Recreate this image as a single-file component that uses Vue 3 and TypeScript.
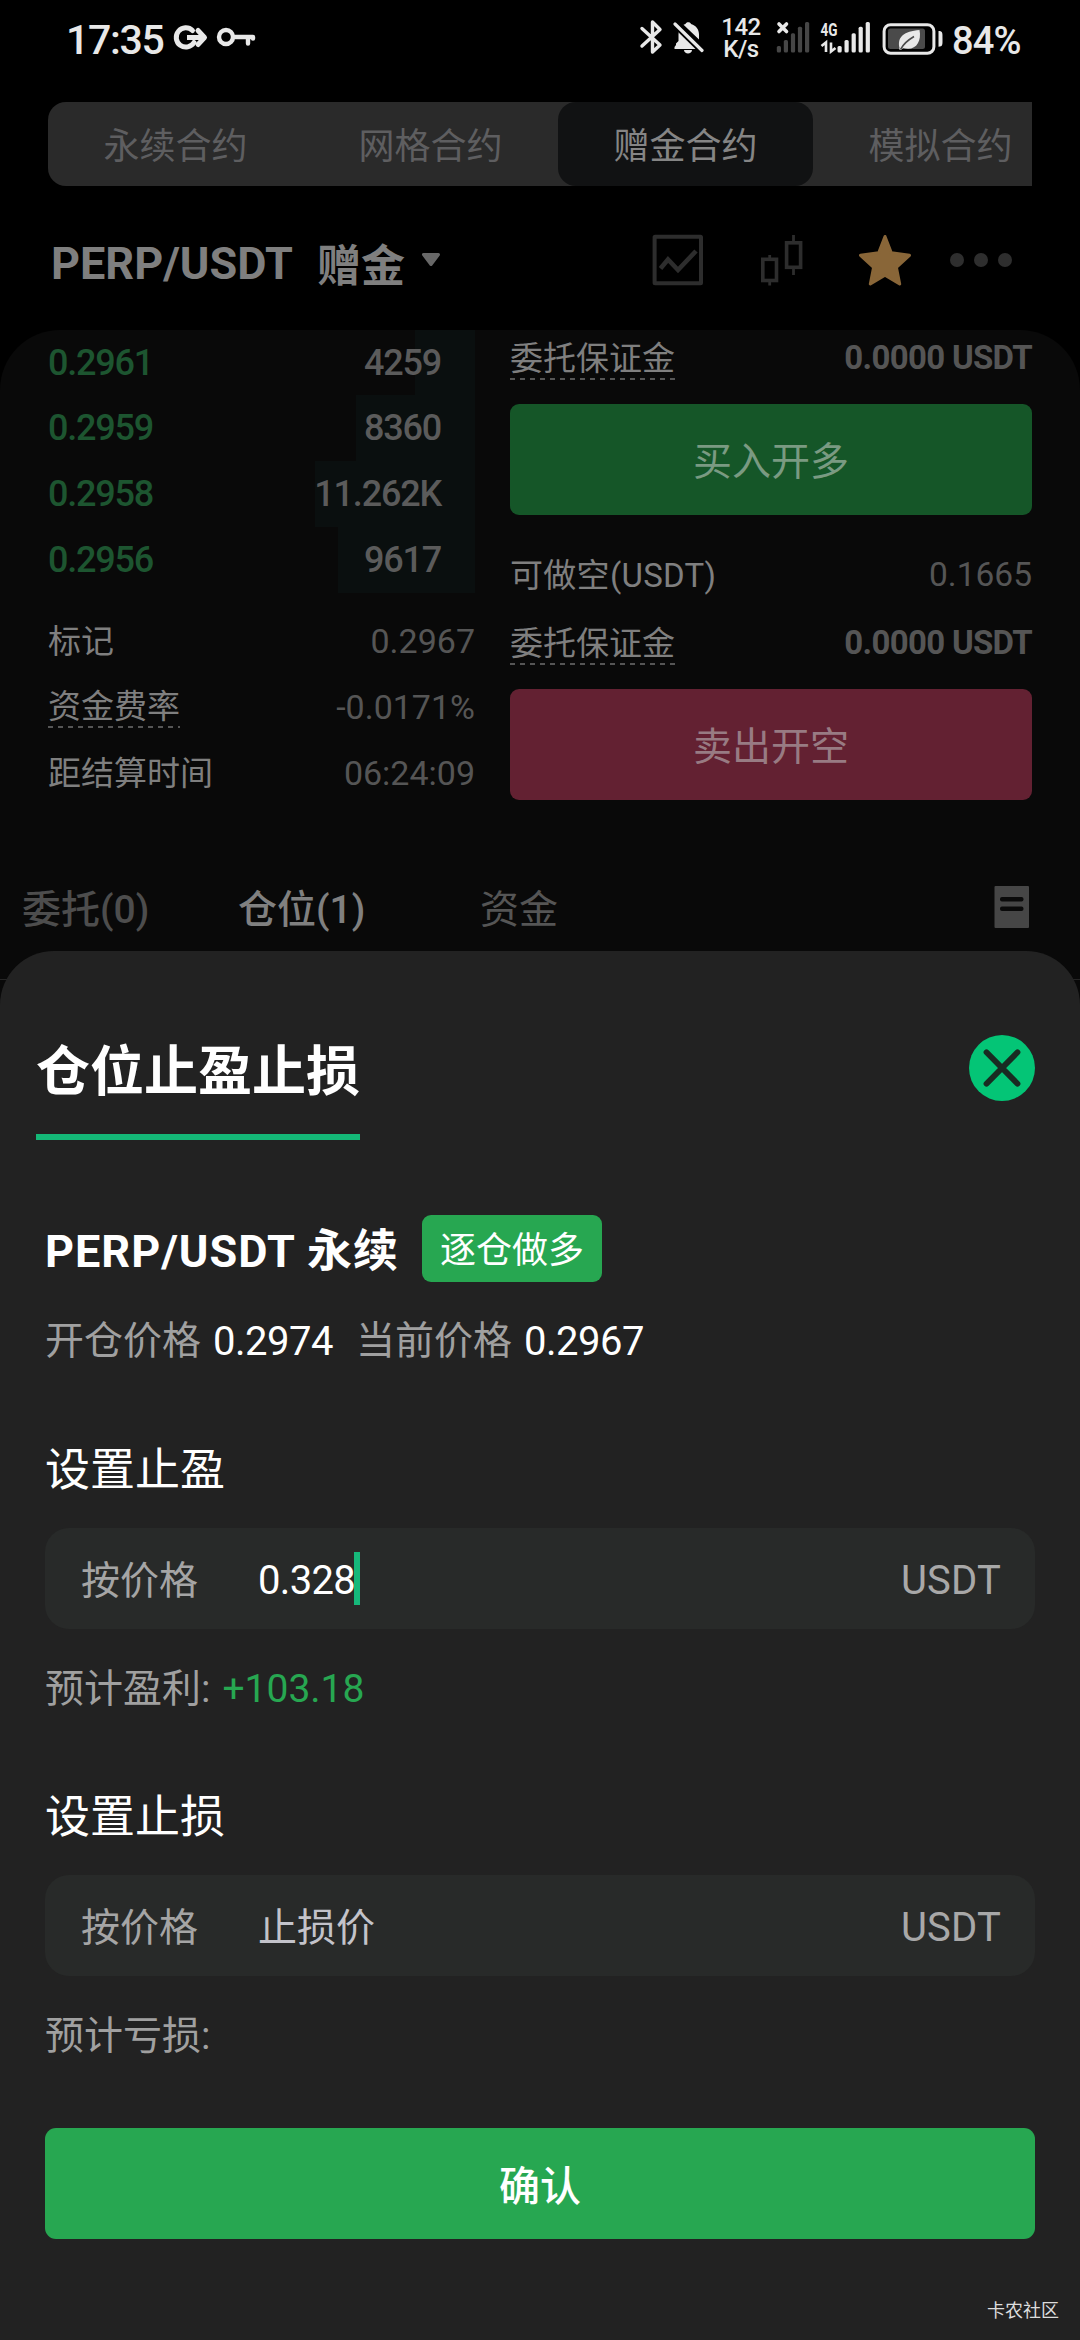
<script setup lang="ts">
interface BookRow {
  price: string
  amount: string
  depth: number
}

interface Stat {
  label: string
  value: string
  hint?: boolean
}

const modes: string[] = ['永续合约', '网格合约', '赠金合约', '模拟合约']
const activeMode = 2

const bids: BookRow[] = [
  { price: '0.2961', amount: '4259', depth: 60 },
  { price: '0.2959', amount: '8360', depth: 119 },
  { price: '0.2958', amount: '11.262K', depth: 160 },
  { price: '0.2956', amount: '9617', depth: 137 },
]

const stats: Stat[] = [
  { label: '标记', value: '0.2967' },
  { label: '资金费率', value: '-0.0171%', hint: true },
  { label: '距结算时间', value: '06:24:09' },
]

const bars = [
  { x: 0, y: 46 },
  { x: 7, y: 40 },
  { x: 14.1, y: 33.3 },
  { x: 21.1, y: 26.7 },
  { x: 28.2, y: 22 },
]
</script>

<template>
  <div class="screen">
    <div class="status">
      <span class="clock">17:35</span>
      <svg class="i-g" width="36" height="28" viewBox="172 23 36 28" fill="none" stroke="#e8e8e8" stroke-width="5" stroke-linejoin="round">
        <path d="M192.500 30.500A9.600 9.600 0 1 0 194 42.500" stroke-linecap="round" />
        <path d="M187 37.500H202" />
        <path d="M198 30.500L204.500 37.500L198 44.500" stroke-linecap="round" />
      </svg>
      <svg class="i-key" width="40" height="20" viewBox="216 27 40 20" fill="none" stroke="#e8e8e8" stroke-width="4.400" stroke-linecap="round" stroke-linejoin="round">
        <circle cx="226" cy="37" r="7" />
        <path d="M234 37H253V38.500M248 37V43.500" />
      </svg>
      <span class="grow"></span>
      <svg class="i-bt" width="24" height="36" viewBox="638 19 24 36" fill="none" stroke="#e8e8e8" stroke-width="3.400" stroke-linejoin="round" stroke-linecap="round">
        <path d="M641 28.500L659 45L651.500 52V22L659 29.500L641 46" />
      </svg>
      <svg class="i-bell" width="31" height="34" viewBox="672 20 31 34">
        <path fill="#e8e8e8" d="M675 45V43.500L677.500 41V34.500C677.500 31 678.500 28 680.500 26.300L697 43.500L699 47V49H673.500V47ZM682.500 24.800L684.500 24C685 21.500 689.500 21.500 690 24C695.500 25.500 698 30 698 34.500V39.500ZM683 50H691C691 54.500 683 54.500 683 50Z" />
        <path d="M674 24L701 50.500" stroke="#000" stroke-width="7" />
        <path d="M674 24L701 50.500" stroke="#e8e8e8" stroke-width="3.200" stroke-linecap="round" />
      </svg>
      <span class="speed"><b>142</b><b>K/s</b></span>
      <svg class="i-sim" width="34" height="34" viewBox="775 20 34 34">
        <rect v-for="b in bars" :key="b.x" :x="775.800 + b.x" :y="b.y" width="4.200" :height="52.500 - b.y" rx="1.500" fill="#464646" />
        <path d="M778 24L785.500 31.500M785.500 24L778 31.500" stroke="#e8e8e8" stroke-width="3.600" stroke-linecap="round" />
      </svg>
      <svg class="i-sim2" width="52" height="44" viewBox="819 10 52 44">
        <text x="819.500" y="35.500" font-size="19" font-weight="700" textLength="17" lengthAdjust="spacingAndGlyphs" fill="#e8e8e8">4G</text>
        <path d="M820.500 46L825 42.500V52M830 42.500V51.500L834.500 48" fill="none" stroke="#e8e8e8" stroke-width="2.600" />
        <rect v-for="b in bars" :key="b.x" :x="836.500 + b.x" :y="b.y" width="4.200" :height="52.500 - b.y" rx="1.500" fill="#e8e8e8" />
      </svg>
      <svg class="i-bat" width="62" height="34" viewBox="881 21.500 62 34">
        <rect x="883.100" y="24.200" width="49.800" height="28.600" rx="6.500" fill="none" stroke="#e8e8e8" stroke-width="3" />
        <rect x="887" y="28" width="37" height="20.500" rx="2.500" fill="#4a4a4a" />
        <path d="M937.500 30.500C942 30.500 941.500 33 941.500 38.300C941.500 44 942 46.200 937.500 46.200Z" fill="#e8e8e8" />
        <path d="M918.500 29.500C921 42 914 51 902 47.500L900 49.500C898 49.500 898 48.500 898.500 47.500C896 36 903 31 918.500 29.500Z" fill="#e8e8e8" />
        <path d="M899.500 49C902.500 43 907 39.500 913 36" fill="none" stroke="#4a4a4a" stroke-width="1.600" />
      </svg>
      <span class="battery">84%</span>
    </div>

    <div class="modes">
      <div v-for="(m, i) in modes" :key="m" class="mode" :class="{ on: i === activeMode }">{{ m }}</div>
    </div>

    <div class="pair">
      <span class="symbol">PERP/USDT</span>
      <span class="gift">赠金</span>
      <svg class="caret" width="20" height="16" viewBox="0 0 20 16"><path d="M2.500 2.500H17.500L10 12.500Z" fill="#686868" stroke="#686868" stroke-width="3" stroke-linejoin="round" /></svg>
      <span class="grow"></span>
      <svg width="52" height="52" viewBox="652 236 52 52" fill="none" stroke="#2d2d2d">
        <rect x="654.600" y="238.700" width="46.400" height="46.600" rx="0.500" stroke-width="4" />
        <path d="M660.500 270.500L668 261.500L678 272L696 253" stroke-width="4.600" />
      </svg>
      <svg class="candles" width="44" height="52" viewBox="760 236 44 52" fill="none" stroke="#2d2d2d">
        <rect x="762.800" y="261.300" width="13.700" height="21.200" stroke-width="3.600" />
        <rect x="786.600" y="244.800" width="14" height="24.500" stroke-width="3.600" />
        <path d="M769.700 257V261M769.700 283V287.500M793.500 237V244M793.500 270V277" stroke-width="2.800" />
      </svg>
      <svg class="star" width="54" height="52" viewBox="858 236 54 52">
        <path d="M885 238.500L891.300 254.800L909.500 257.300L896.400 269.300L899.700 286L885 277.200L870.300 286L873.600 269.300L860.500 257.300L878.700 254.800Z" fill="#896638" stroke="#896638" stroke-width="3" stroke-linejoin="round" />
      </svg>
      <svg class="dots" width="64" height="16" viewBox="949 253.500 64 16" fill="#2e2e2e">
        <circle cx="957" cy="261.500" r="7" /><circle cx="981" cy="261.500" r="7" /><circle cx="1005" cy="261.500" r="7" />
      </svg>
    </div>

    <div class="panel">
      <div class="trade">
        <div class="book">
          <div v-for="r in bids" :key="r.price" class="bid">
            <span class="price">{{ r.price }}</span>
            <span class="amount">{{ r.amount }}</span>
            <i class="depth" :style="{ width: r.depth + 'px' }"></i>
          </div>
          <div class="stats">
            <div v-for="s in stats" :key="s.label" class="stat">
              <span class="label" :class="{ hint: s.hint }">{{ s.label }}</span>
              <span class="value">{{ s.value }}</span>
            </div>
          </div>
        </div>
        <div class="order">
          <div class="line"><span class="label hint">委托保证金</span><b class="margin">0.0000 USDT</b></div>
          <div class="btn buy">买入开多</div>
          <div class="line avail"><span class="label">可做空(USDT)</span><span class="value">0.1665</span></div>
          <div class="line"><span class="label hint">委托保证金</span><b class="margin">0.0000 USDT</b></div>
          <div class="btn sell">卖出开空</div>
        </div>
      </div>
      <div class="tabs">
        <span class="tab first">委托(0)</span>
        <span class="tab second">仓位(1)</span>
        <span class="tab third">资金</span>
        <span class="grow"></span>
        <svg width="36" height="42" viewBox="0 0 36 42">
          <rect x="0.500" width="34.500" height="42" rx="1" fill="#464646" />
          <rect x="6" y="11" width="23.500" height="4.500" rx="2" fill="#0a0a0a" />
          <rect x="6" y="20.500" width="23.500" height="4.500" rx="2" fill="#0a0a0a" />
        </svg>
      </div>
    </div>

    <div class="sheet">
      <div class="head">
        <span class="title">仓位止盈止损</span>
        <svg width="66" height="66" viewBox="0 0 66 66">
          <circle cx="33" cy="33" r="33" fill="#04c576" />
          <path d="M17.500 17.300L48.500 48.700M48.500 17.300L17.500 48.700" stroke="#192b22" stroke-width="5.800" stroke-linecap="round" />
        </svg>
      </div>
      <div class="contract"><span class="name">PERP/USDT 永续</span><span class="badge">逐仓做多</span></div>
      <div class="prices">
        <span class="dim">开仓价格</span><span class="num">0.2974</span>
        <span class="dim second-price">当前价格</span><span class="num">0.2967</span>
      </div>
      <div class="section">设置止盈</div>
      <div class="field">
        <span class="kind">按价格</span><span class="entry">0.328</span><i class="cursor"></i>
        <span class="grow"></span><span class="unit">USDT</span>
      </div>
      <div class="estimate">预计盈利:<span class="gain">+103.18</span></div>
      <div class="section loss">设置止损</div>
      <div class="field">
        <span class="kind">按价格</span><span class="placeholder">止损价</span>
        <span class="grow"></span><span class="unit">USDT</span>
      </div>
      <div class="estimate">预计亏损:</div>
      <div class="confirm">确认</div>
      <div class="mark">卡农社区</div>
    </div>
  </div>
</template>

<style>
body {
  background: #000;
}
</style>

<style scoped>
.screen,
.screen * {
  box-sizing: border-box;
}
.screen {
  position: relative;
  display: flex;
  flex-direction: column;
  width: 1080px;
  height: 2340px;
  overflow: hidden;
  background: #000;
  color: #7f7f7f;
  font-family: Roboto, "Noto Sans CJK SC", sans-serif;
  line-height: 1.2;
  white-space: nowrap;
}
svg {
  display: block;
  flex: none;
}
.grow {
  flex: 1;
}

.status {
  display: flex;
  align-items: flex-start;
  height: 102px;
  flex: none;
  padding: 0 58px 0 66px;
  color: #e8e8e8;
}
.clock {
  width: 106px;
  padding-top: 16px;
  font-size: 41px;
  font-weight: 500;
  line-height: 48px;
  letter-spacing: -1.3px;
}
.i-g { margin-top: 23px; }
.i-key { margin: 27px 0 0 8px; }
.i-bt { margin-top: 19px; }
.i-bell { margin: 20px 0 0 10px; }
.speed {
  display: flex;
  flex-direction: column;
  align-items: center;
  width: 42px;
  margin: 17px 0 0 16px;
}
.speed b {
  font-size: 24px;
  font-weight: 500;
  line-height: 21.500px;
  letter-spacing: -0.5px;
}
.i-sim { margin: 20px 0 0 14px; }
.i-sim2 { margin: 10px 0 0 10px; }
.i-bat { margin: 21.500px 0 0 10px; }
.battery {
  width: 70px;
  margin-left: 8px;
  padding-top: 18px;
  font-size: 38px;
  font-weight: 500;
  line-height: 46px;
  letter-spacing: -0.8px;
}

.modes {
  display: flex;
  flex: none;
  width: 984px;
  height: 84px;
  margin-left: 48px;
  overflow: hidden;
  border-radius: 18px 0 0 18px;
  background: #2a2a2a;
}
.mode {
  flex: none;
  width: 255px;
  padding-top: 3px;
  color: #5e5e60;
  font-size: 36px;
  line-height: 84px;
  text-align: center;
}
.mode.on {
  border-radius: 18px;
  background: #111213;
  color: #858585;
}

.pair {
  display: flex;
  align-items: center;
  flex: none;
  height: 144px;
  padding: 8px 67px 0 51px;
  font-size: 45px;
  font-weight: 700;
}
.pair > svg { margin-top: -4px; }
.symbol { width: 266px; padding-top: 4px; }
.gift { padding-top: 10px; font-size: 44px; }
.pair .caret { margin: -4px 0 0 16px; }
.candles { margin-left: 56px; }
.star { margin-left: 54px; }
.dots { margin-left: 37px; }

.panel {
  flex: 1;
  border-radius: 60px 60px 0 0;
  overflow: hidden;
  background: #090909;
}
.trade {
  display: flex;
  height: 511px;
}
.book {
  width: 475px;
  padding-left: 48px;
}
.bid {
  position: relative;
  display: flex;
  align-items: center;
  justify-content: space-between;
  height: 66px;
  padding: 2px 34px 0 0;
  font-size: 36px;
  font-weight: 500;
  letter-spacing: -1.2px;
}
.bid:first-child { height: 65px; }
.price,
.amount {
  position: relative;
  z-index: 1;
}
.price { color: #1d5530; }
.amount { color: #5b5b5b; }
.depth {
  position: absolute;
  top: 0;
  right: 0;
  height: 100%;
  background: #0a0f0f;
}
.stats { padding-top: 15px; }
.stat {
  display: flex;
  align-items: center;
  justify-content: space-between;
  height: 66px;
}
.label {
  height: 44px;
  color: #7f7f7f;
  font-size: 33px;
  line-height: 46px;
}
.hint {
  background: repeating-linear-gradient(90deg, #555 0 5px, transparent 5px 10px) left bottom / 100% 2px no-repeat;
}
.stat .hint { margin-top: -2px; }
.value {
  color: #555;
  font-size: 34px;
}
.order {
  width: 522px;
  margin-left: 35px;
  padding-top: 6px;
}
.line {
  display: flex;
  align-items: center;
  justify-content: space-between;
  height: 44px;
}
.avail { margin: 38px 0 24px; }
.avail .label { letter-spacing: 0.3px; }
.avail .value { font-size: 33.500px; }
.margin {
  color: #555;
  font-size: 33px;
  letter-spacing: -0.7px;
}
.btn {
  height: 111px;
  margin-top: 24px;
  border-radius: 9px;
  font-size: 39px;
  line-height: 117px;
  text-align: center;
}
.buy {
  background: #155628;
  color: #7a9a82;
}
.sell {
  background: #632132;
  color: #987b83;
}
.tabs {
  display: flex;
  align-items: center;
  height: 139px;
  padding: 0 50px 0 22px;
  border-bottom: 1px solid #262626;
  color: #4d4d4d;
  font-size: 39px;
}
.tabs svg { margin-top: -6px; }
.tab {
  font-weight: 500;
}
.first { width: 216px; }
.second { width: 242px; color: #808080; }
.third { font-weight: 400; color: #555; }

.sheet {
  position: absolute;
  top: 951px;
  left: 0;
  display: flex;
  flex-direction: column;
  width: 1080px;
  height: 1389px;
  padding: 0 45px;
  border-radius: 54px 54px 0 0;
  background: #222;
  color: #fff;
}
.head {
  display: flex;
  justify-content: space-between;
  align-items: flex-start;
  height: 264px;
  padding-top: 84px;
  margin-left: -9px;
}
.title {
  height: 105px;
  border-bottom: 6px solid #14b877;
  font-size: 54px;
  font-weight: 700;
  line-height: 76px;
}
.contract {
  display: flex;
  align-items: center;
  height: 67px;
}
.name {
  width: 377px;
  padding-top: 6px;
  font-size: 45px;
  font-weight: 700;
  letter-spacing: 1px;
}
.badge {
  width: 180px;
  height: 67px;
  border-radius: 9px;
  background: #27a751;
  font-size: 36px;
  line-height: 73px;
  text-align: center;
}
.prices {
  display: flex;
  align-items: center;
  height: 50px;
  margin-top: 33px;
  padding-top: 3px;
  font-size: 39px;
}
.dim { color: #a0a0a0; }
.num {
  margin-left: 12px;
  font-size: 40px;
  letter-spacing: -0.5px;
}
.second-price { margin-left: 23px; }
.section {
  height: 60px;
  margin-top: 74px;
  font-size: 45px;
  line-height: 64px;
}
.section.loss { margin-top: 73px; }
.field {
  display: flex;
  align-items: center;
  height: 101px;
  margin-top: 29px;
  padding: 5px 34px 0 36px;
  border-radius: 24px;
  background: #282a29;
  font-size: 39px;
}
.kind {
  width: 177px;
  color: #a5a5a5;
}
.entry {
  width: 96px;
  font-size: 40px;
  letter-spacing: -0.7px;
}
.cursor {
  width: 6px;
  height: 53px;
  margin-top: -5px;
  background: #16b87a;
}
.placeholder { color: #c3c3ca; }
.unit {
  color: #a8a8a8;
  font-size: 40px;
  letter-spacing: 0.2px;
}
.estimate {
  height: 50px;
  margin-top: 34px;
  color: #a0a0a0;
  font-size: 39px;
  line-height: 52px;
}
.gain {
  margin-left: 12px;
  color: #27a751;
}
.confirm {
  height: 111px;
  margin-top: 68px;
  border-radius: 11px;
  background: #27a751;
  font-size: 41px;
  font-weight: 500;
  line-height: 118px;
  text-align: center;
}
.mark {
  margin: 60px -24px 0 0;
  color: #ddd;
  font-size: 18px;
  line-height: 24px;
  text-align: right;
}
</style>
